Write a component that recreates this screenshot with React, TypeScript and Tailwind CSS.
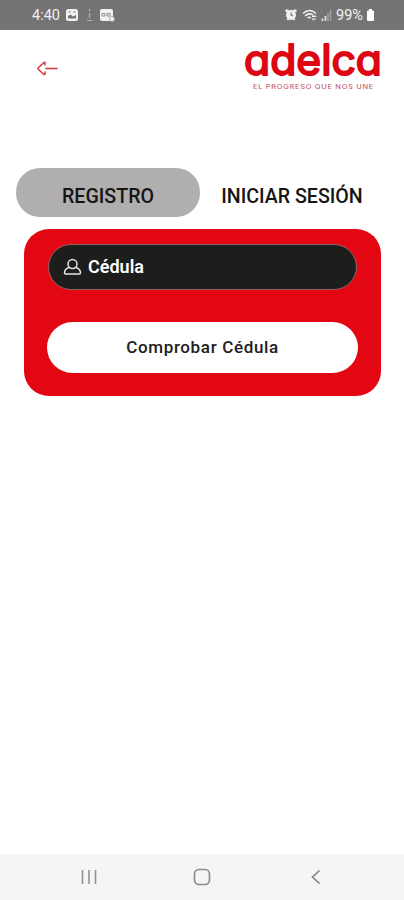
import React from "react";

const StatusBar: React.FC = () => (
  <div className="flex h-[30px] items-center bg-[#747474] pl-8 pr-[29px] text-[14.5px] text-[#f1f1f1]">
    <span className="w-[33px] pt-px">4:40</span>
    <svg width="50" height="16" viewBox="0 0 50 16" fill="none">
      <rect x="1" y="2" width="12" height="12" rx="2.5" fill="#f1f1f1" />
      <path d="M3 11.500V9l2.500-1.500L8 9.500 11 8v3.500z" fill="#747474" />
      <path d="M3.500 5h2M8.500 5h2" stroke="#747474" strokeWidth="1.2" />
      <path d="M24.500 2v2M24.500 6v5M22 13.500h5" stroke="#b5b5b5" strokeWidth="1.2" />
      <rect x="35" y="2" width="13" height="12" rx="2" fill="#f1f1f1" />
      <path d="M37 6.500h3v2.500h-3zM42 6.500h3v2.500h-3z" stroke="#8d8d8d" />
      <circle cx="47" cy="12" r="2.500" fill="#f1f1f1" stroke="#999" strokeWidth=".7" />
    </svg>
    <svg className="ml-auto" width="48" height="16" viewBox="0 0 48 16" fill="none">
      <circle cx="7" cy="8" r="5" fill="#f1f1f1" />
      <path d="M2.500 5V3.500H4.500M9.500 3.500h2V5M3.500 13l1-1.500M10.500 13l-1-1.500" stroke="#f1f1f1" strokeWidth="2" />
      <path d="M7 5.500V8l2 1" stroke="#747474" strokeWidth="1.2" />
      <path
        d="M19 6.500q6.500-6 13 0M21 9q4.500-4 8.500-.5M23.500 11q2-1.500 3.500 0"
        stroke="#f1f1f1"
        strokeWidth="1.5"
      />
      <path d="M28 9.500h4l-1.500-1.500M32 12h-4l1.500 1.500" stroke="#f1f1f1" />
      <path d="M38.500 14v-2.500M41.500 14V9" stroke="#e5e5e5" strokeWidth="1.7" />
      <path d="M44 14V6M46.500 14V3" stroke="#a5a5a5" strokeWidth="1.4" />
    </svg>
    <span className="ml-[4px] w-[30px] whitespace-nowrap pt-px">99%</span>
    <svg className="shrink-0" width="9" height="14" viewBox="0 0 9 14">
      <path d="M3 1h3v1.500h1q1 0 1 1V12q0 1-1 1H2q-1 0-1-1V3.500q0-1 1-1h1z" fill="#fff" />
    </svg>
  </div>
);

const Logo: React.FC = () => (
  <svg width="144" height="68" viewBox="0 0 144 68" fill="#dc0713" overflow="visible">
    <text
      x="0"
      y="45"
      textLength="138"
      lengthAdjust="spacingAndGlyphs"
      stroke="#dc0713"
      strokeWidth="2"
      strokeLinejoin="round"
      className="font-['Inter',sans-serif] text-[42px] font-normal [font-feature-settings:'cv11']"
    >
      adelca
    </text>
    <text
      x="9"
      y="58.5"
      textLength="121"
      lengthAdjust="spacingAndGlyphs"
      fill="#c9606a"
      className="font-['Inter',sans-serif] text-[6px] font-medium tracking-[0.6px]"
    >
      EL PROGRESO QUE NOS UNE
    </text>
  </svg>
);

const Header: React.FC = () => (
  <header className="flex h-[138px] items-start justify-between pl-9 pr-[16px]">
    <button aria-label="Volver" className="mt-[30px]">
      <svg width="24" height="18" viewBox="0 0 24 18" fill="none" stroke="#cf3540" strokeWidth="1.5">
        <path d="M21 8.500H10M9 5V3.200Q9 1.500 7.700 2.700L2.500 7.500q-1 1 0 2l5.200 4.800Q9 15.500 9 13.800V12" strokeLinecap="round" />
      </svg>
    </button>
    <Logo />
  </header>
);

const Tabs: React.FC = () => (
  <div className="flex h-[49px] pl-4 text-[19.6px] font-medium leading-[56px] text-[#151515]">
    <button className="w-[184px] rounded-[24px] bg-[#b0aeaf] pt-px">REGISTRO</button>
    <button className="w-[184px] whitespace-nowrap pt-px">INICIAR SESIÓN</button>
  </div>
);

const RegisterCard: React.FC = () => (
  <div className="ml-6 mr-[23px] mt-3 h-[167px] rounded-[25px] bg-[#e30613] px-[23px] pt-[15px]">
    <div className="mx-px flex h-[46px] items-center rounded-full border border-[#8d6464] bg-[#1d1e1b] pl-[14px] text-white">
      <svg width="19" height="18" viewBox="0 0 19 18" fill="none" stroke="#e5e5e5" strokeWidth="1.5">
        <circle cx="9.500" cy="6" r="4.500" />
        <path d="M6 9.500q-4.500 1.500-4.500 5.500 0 1 1 1h14q1 0 1-1 0-4-4.500-5.500" />
      </svg>
      <span className="-mt-0.5 ml-[6px] text-[18px] font-semibold">Cédula</span>
    </div>
    <button className="mt-8 h-[51px] w-full rounded-full bg-white text-[17px] font-medium tracking-[0.65px] text-[#202020]">
      Comprobar Cédula
    </button>
  </div>
);

const NavBar: React.FC = () => (
  <nav className="mt-auto flex h-[46px] items-center justify-between bg-[#f5f5f5] pl-[81px] pr-[80px]">
    <svg width="16" height="16" viewBox="0 0 16 16" stroke="#929292" strokeWidth="1.6">
      <path d="M1.500 1v14M8 1v14M14.500 1v14" />
    </svg>
    <svg className="-ml-px" width="18" height="18" viewBox="0 0 18 18" fill="none" stroke="#8c8c8c" strokeWidth="1.7">
      <rect x="1.500" y="1.500" width="15" height="15" rx="4.500" />
    </svg>
    <svg width="16" height="16" viewBox="0 0 16 16" fill="none" stroke="#858585" strokeWidth="1.7">
      <path d="M11.500 1.500 4.500 8l7 6.500" />
    </svg>
  </nav>
);

const App: React.FC = () => {
  return (
    <div className="flex h-screen w-full flex-col bg-white font-['Roboto',sans-serif]">
      <StatusBar />
      <Header />
      <Tabs />
      <RegisterCard />
      <NavBar />
    </div>
  );
};

export default App;
